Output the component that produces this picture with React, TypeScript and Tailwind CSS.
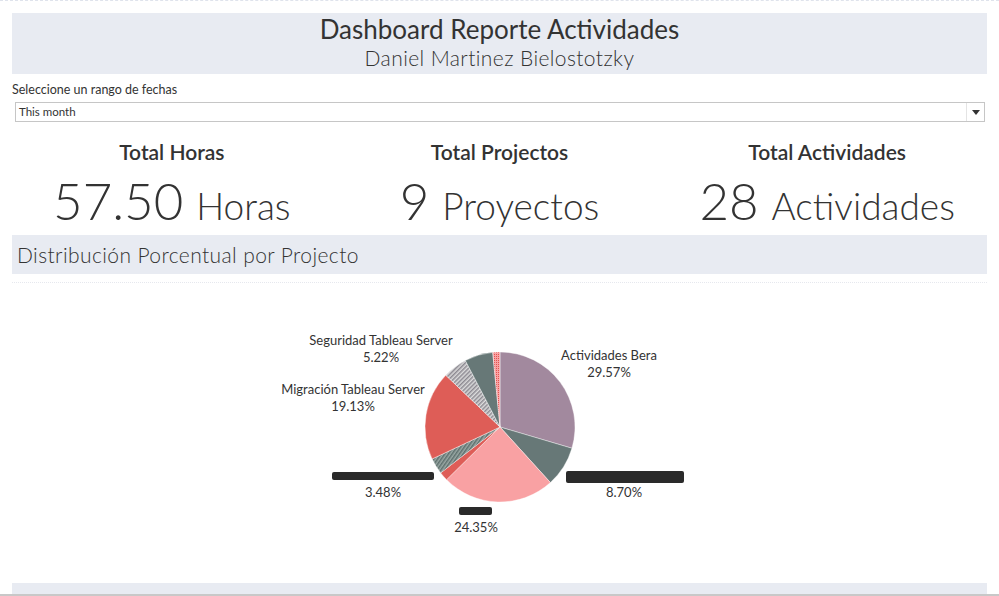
import React from "react";

type Slice = {
  pct: number;
  fill: string;
};

const CX = 500;
const CY = 427;
const R = 75;

// orden en sentido horario desde las 12
const slices: Slice[] = [
  { pct: 29.57, fill: "#a2899e" },
  { pct: 8.7, fill: "#677877" },
  { pct: 24.35, fill: "#f9a1a3" },
  { pct: 1.9, fill: "#de5d57" },
  { pct: 3.48, fill: "url(#hatchGreen)" },
  { pct: 19.13, fill: "#de5d57" },
  { pct: 5.22, fill: "url(#hatchGray)" },
  { pct: 6.1, fill: "#677877" },
  { pct: 1.55, fill: "url(#pinkDots)" },
];

const pt = (deg: number) => {
  const a = (deg * Math.PI) / 180;
  return [CX + R * Math.sin(a), CY - R * Math.cos(a)];
};

const arcPath = (a0: number, a1: number) => {
  const [x0, y0] = pt(a0);
  const [x1, y1] = pt(a1);
  const large = a1 - a0 > 180 ? 1 : 0;
  return `M ${CX} ${CY} L ${x0} ${y0} A ${R} ${R} 0 ${large} 1 ${x1} ${y1} Z`;
};

const labels = [
  { x: 381, y: 345, name: "Seguridad Tableau Server", pct: "5.22%" },
  { x: 353, y: 394, name: "Migración Tableau Server", pct: "19.13%" },
  { x: 609, y: 360, name: "Actividades Bera", pct: "29.57%" },
];

const redacted = [
  { x: 332, y: 472, w: 102, h: 8, pct: "3.48%", px: 383 },
  { x: 566, y: 471, w: 118, h: 12, pct: "8.70%", px: 624 },
  { x: 459, y: 507, w: 33, h: 8, pct: "24.35%", px: 476 },
];

const PieChart = () => {
  let acc = 0;
  const paths = slices.map((s, i) => {
    const a0 = (acc / 100) * 360;
    acc += s.pct;
    const a1 = (acc / 100) * 360;
    return <path key={i} d={arcPath(a0, a1)} fill={s.fill} stroke="#ffffff" strokeWidth={0.4} />;
  });

  return (
    <svg viewBox="12 283 976 298" className="block h-[298px] w-[976px]">
      <defs>
        <pattern id="hatchGreen" width="3" height="3" patternUnits="userSpaceOnUse" patternTransform="rotate(35)">
          <rect width="3" height="3" fill="#9aa9a5" />
          <rect width="1.5" height="3" fill="#5e706e" />
        </pattern>
        <pattern id="hatchGray" width="3" height="3" patternUnits="userSpaceOnUse" patternTransform="rotate(45)">
          <rect width="3" height="3" fill="#dcdcdc" />
          <rect width="1.5" height="3" fill="#8d8a92" />
        </pattern>
        <pattern id="pinkDots" width="2" height="2" patternUnits="userSpaceOnUse">
          <rect width="2" height="2" fill="#f9a1a3" />
          <rect width="1" height="1" fill="#e2534f" />
        </pattern>
      </defs>
      {paths}
      <g fontFamily="Lato, 'Open Sans', sans-serif" fontSize="13" fill="#333333" textAnchor="middle">
        {labels.map((l) => (
          <g key={l.name}>
            <text x={l.x} y={l.y}>{l.name}</text>
            <text x={l.x} y={l.y + 17}>{l.pct}</text>
          </g>
        ))}
        {redacted.map((r) => (
          <g key={r.pct}>
            <rect x={r.x} y={r.y} width={r.w} height={r.h} rx={2} fill="#2a2a2a" />
            <text x={r.px} y={r.y + (r.h > 8 ? 26 : 25)}>{r.pct}</text>
          </g>
        ))}
      </g>
    </svg>
  );
};

const Kpi = ({ title, value, unit }: { title: string; value: string; unit: string }) => (
  <div className="flex flex-col items-center">
    <div className="h-[26px] text-[21px] font-semibold leading-[26px] text-[#333]">{title}</div>
    <div className="mt-[10px] flex items-baseline whitespace-nowrap leading-[52px] text-[#333]">
      <span className="text-[51px] font-light">{value}</span>
      <span className="ml-[13px] text-[37px] font-light">{unit}</span>
    </div>
  </div>
);

export default function App() {
  return (
    <div className="relative h-[596px] w-[999px] overflow-hidden bg-white font-['Lato','Open_Sans',sans-serif] text-[#333]">
      <div className="border-t border-dashed border-[#dfe3ec]" />
      <div className="mx-[12px] mt-[12px] flex h-[61px] flex-col items-center bg-[#e8ebf2]">
        <div className="mt-[1px] text-[26px] leading-[31px]">Dashboard Reporte Actividades</div>
        <div className="text-[21px] font-light leading-[26px] tracking-[0.4px]">Daniel Martinez Bielostotzky</div>
      </div>

      <div className="mx-[12px] mt-[9px] text-[12.5px] leading-[14px]">Seleccione un rango de fechas</div>
      <div className="ml-[15px] mr-[14px] mt-[5px] flex h-[20px] items-center border border-[#c6c6c6] bg-white">
        <span className="flex-1 pl-[3px] text-[11.5px] text-[#333]">This month</span>
        <span className="flex h-full w-[18px] items-center justify-center border-l border-[#e4e4e4]">
          <svg width="8" height="5" viewBox="0 0 8 5">
            <path d="M0 0 H8 L4 5 Z" fill="#333" />
          </svg>
        </span>
      </div>

      <div className="mx-[8px] mt-[17px] grid h-[92px] grid-cols-3">
        <Kpi title="Total Horas" value="57.50" unit="Horas" />
        <Kpi title="Total Projectos" value="9" unit="Proyectos" />
        <Kpi title="Total Actividades" value="28" unit="Actividades" />
      </div>

      <div className="mx-[12px] mt-[4px] flex h-[39px] items-center bg-[#e8ebf2] pl-[5px] text-[21px] font-light tracking-[0.4px]">
        Distribución Porcentual por Projecto
      </div>
      <div className="mx-[12px] mt-[8px] border-t border-dotted border-[#e6e8ee]" />

      <div className="mx-[12px]">
        <PieChart />
      </div>

      <div className="absolute bottom-0 left-0 right-0">
        <div className="mx-[12px] h-[11px] bg-[#e8ebf2]" />
        <div className="h-[2px] bg-[#c8c8c8]" />
      </div>
    </div>
  );
}
